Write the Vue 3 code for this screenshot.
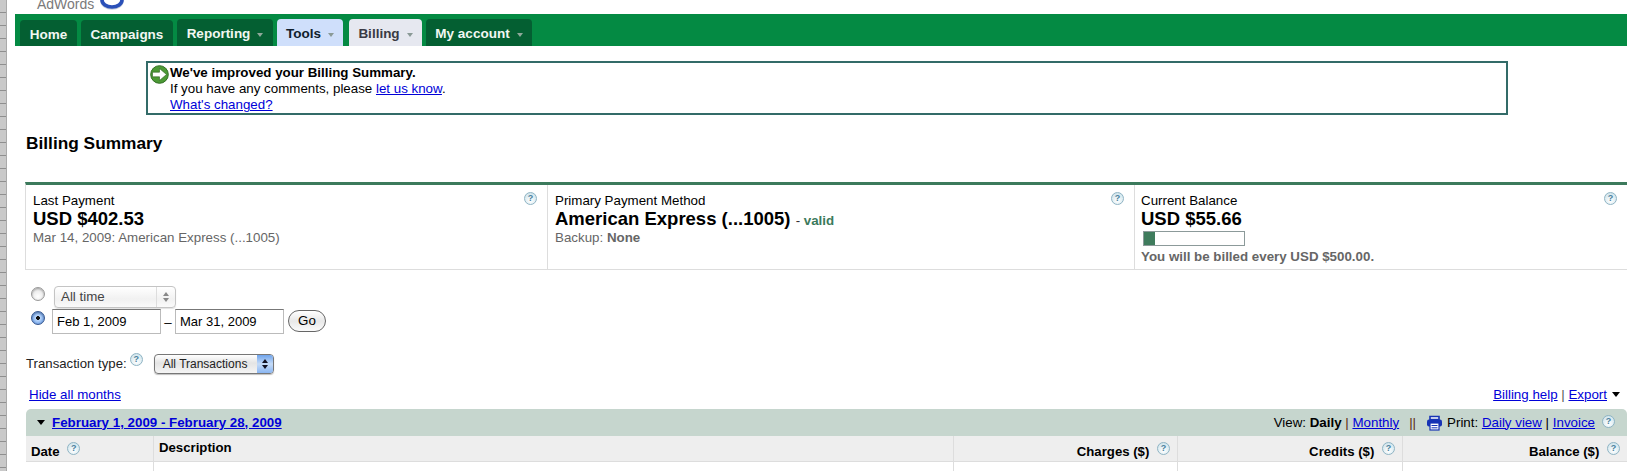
<script setup>
const tabs = [
  { label: 'Home', w: 57, cls: 'low' },
  { label: 'Campaigns', w: 92, cls: 'low' },
  { label: 'Reporting', w: 96, arrow: true },
  { label: 'Tools', w: 66, arrow: true, cls: 'tools' },
  { label: 'Billing', w: 73, arrow: true, cls: 'billing' },
  { label: 'My account', w: 106, arrow: true }
]
</script>

<template>
  <div class="page">
    <div class="strip"></div>
    <div class="main">
      <div class="logo">
        <span class="logo-text">AdWords</span>
        <svg class="logo-mark" width="24" height="11" viewBox="0 0 24 11">
          <ellipse cx="12" cy="0" rx="10" ry="7" fill="none" stroke="#c9cfdc" stroke-width="3.6" transform="translate(0 1)" />
          <ellipse cx="12" cy="0" rx="10" ry="7" fill="none" stroke="#2a50b8" stroke-width="3.6" />
        </svg>
      </div>

      <nav class="nav">
        <div
          v-for="t in tabs"
          :key="t.label"
          class="tab"
          :class="t.cls"
          :style="{ width: t.w + 'px' }"
        >
          {{ t.label }}<i v-if="t.arrow" class="caret"></i>
        </div>
      </nav>

      <div class="notice">
        <svg class="go-icon" width="19" height="19" viewBox="0 0 19 19">
          <circle cx="9.5" cy="9.5" r="8.8" fill="#4c9a35" stroke="#2f6d22" stroke-width="1" />
          <path d="M2.5 7.2h7V3.5l7 6-7 6v-3.7h-7z" fill="#fff" stroke="#2b5e20" stroke-width=".6" />
        </svg>
        <div>
          <div class="b">We've improved your Billing Summary.</div>
          <div>If you have any comments, please <a>let us know</a>.</div>
          <div><a>What's changed?</a></div>
        </div>
      </div>

      <h1 class="title">Billing Summary</h1>

      <section class="summary">
        <div class="cell">
          <span class="help corner">?</span>
          <div class="lbl">Last Payment</div>
          <div class="big">USD $402.53</div>
          <div class="sub">Mar 14, 2009: American Express (...1005)</div>
        </div>
        <div class="cell">
          <span class="help corner">?</span>
          <div class="lbl">Primary Payment Method</div>
          <div class="big">American Express (...1005) <span class="valid"><em>- </em><b>valid</b></span></div>
          <div class="sub">Backup: <b>None</b></div>
        </div>
        <div class="cell">
          <span class="help corner">?</span>
          <div class="lbl">Current Balance</div>
          <div class="big">USD $55.66</div>
          <div class="meter"><div class="meter-fill"></div></div>
          <div class="sub b">You will be billed every USD $500.00.</div>
        </div>
      </section>

      <div class="range">
        <div class="range-row first">
          <span class="radio"></span>
          <div class="select gray">
            <span>All time</span>
            <span class="spin"><i class="up"></i><i class="down"></i></span>
          </div>
        </div>
        <div class="range-row second">
          <span class="radio on"></span>
          <div class="input">Feb 1, 2009</div>
          <span class="dash">–</span>
          <div class="input">Mar 31, 2009</div>
          <div class="go">Go</div>
        </div>
      </div>

      <div class="ttype">
        <span>Transaction type:</span>
        <span class="help raised">?</span>
        <div class="select blue">
          <span>All Transactions</span>
          <span class="spin"><i class="up"></i><i class="down"></i></span>
        </div>
      </div>

      <div class="links">
        <a>Hide all months</a>
        <span class="right"><a>Billing help</a> | <a>Export</a><i class="black-caret"></i></span>
      </div>

      <div class="month">
        <i class="black-caret"></i>
        <a class="b">February 1, 2009 - February 28, 2009</a>
        <div class="month-right">
          <span>View: <b>Daily</b> <em>|</em> <a>Monthly</a></span>
          <em class="sep">||</em>
          <svg class="printer" width="17" height="16" viewBox="0 0 17 16">
            <path d="M4 1.5h9v3H4z" fill="#fff" stroke="#1733b5" stroke-width="1.6" />
            <rect x="1" y="4.5" width="15" height="7" rx="2" fill="#1733b5" />
            <rect x="4" y="8" width="9" height="7" fill="#fff" stroke="#1733b5" stroke-width="1.2" />
            <path d="M5.5 10.5h6M5.5 12.8h6" stroke="#1733b5" stroke-width="1" />
          </svg>
          <span>Print: <a>Daily view</a> | <a>Invoice</a></span>
          <span class="help">?</span>
        </div>
      </div>

      <div class="table">
        <div class="th left date">Date <span class="help">?</span></div>
        <div class="th left desc">Description</div>
        <div class="th">Charges ($) <span class="help">?</span></div>
        <div class="th">Credits ($) <span class="help">?</span></div>
        <div class="th">Balance ($) <span class="help">?</span></div>
        <div class="td"></div>
        <div class="td"></div>
        <div class="td"></div>
        <div class="td"></div>
        <div class="td"></div>
      </div>
    </div>
  </div>
</template>

<style>
html, body { margin: 0; background: #fff; overflow: hidden; }
</style>

<style scoped>
.page {
  display: flex;
  width: 1627px;
  height: 471px;
  overflow: hidden;
  font: 13.33px/16px "Liberation Sans", Arial, sans-serif;
  color: #000;
  background: #fff;
}
a { color: #0000d8; text-decoration: underline; }
.b { font-weight: bold; }
em { font-style: normal; }

.strip {
  flex: 0 0 7px;
  border-right: 1px solid #aaa;
  box-sizing: border-box;
  background: repeating-linear-gradient(#c9c9c9 0 12px, #8f8f8f 12px 13px);
}
.main { flex: 1; min-width: 0; }

.logo {
  height: 14px;
  padding-left: 30px;
  display: flex;
  align-items: flex-start;
}
.logo-text { margin-top: -3px; font-size: 14px; line-height: 14px; color: #7a7a7a; }
.logo-mark { margin-left: 6px; }

.nav {
  height: 32px;
  margin-left: 8px;
  padding-left: 5px;
  background: #048a43;
  display: flex;
  align-items: flex-end;
  gap: 4px;
}
.tab {
  height: 27px;
  box-sizing: border-box;
  padding-top: 7px;
  text-align: center;
  font-size: 13.5px;
  font-weight: bold;
  color: #f2f7f2;
  background: #045f32;
  border-radius: 4px 4px 0 0;
  white-space: nowrap;
}
.tab.low { height: 26px; padding-top: 7px; }
.tab.tools { background: #cfdffb; color: #10202c; margin-right: 2px; }
.tab.billing { background: #e6e8f0; color: #3a3a44; }
.caret {
  display: inline-block;
  margin-left: 7px;
  vertical-align: 1px;
  border: 3.5px solid transparent;
  border-top: 4px solid #8fa89a;
  border-bottom: 0;
}
.tools .caret, .billing .caret { border-top-color: #8a9a96; }

.notice {
  box-sizing: border-box;
  width: 1362px;
  height: 54px;
  margin: 15px 0 0 139px;
  padding: 2px 0 0 2px;
  border: 2px solid #336b68;
  display: flex;
  gap: 1px;
}
.go-icon { flex: none; }

.title {
  margin: 19px 0 0 19px;
  font-size: 17.3px;
  line-height: 19px;
  font-weight: bold;
}

.summary {
  box-sizing: border-box;
  height: 88px;
  margin: 29px 0 0 18px;
  border-top: 3px solid #3c7a5c;
  border-bottom: 1px solid #ddd;
  border-left: 1px solid #ddd;
  display: grid;
  grid-template-columns: 522px 587px 1fr;
}
.cell {
  position: relative;
  padding: 8px 0 0 7px;
  border-right: 1px solid #ddd;
}
.cell:last-child { border-right: 0; padding-left: 6px; }
.lbl { line-height: 15px; }
.big { font-size: 18.5px; line-height: 21px; font-weight: bold; white-space: nowrap; }
.sub { color: #666; line-height: 17px; }
.valid { font-size: 13.33px; line-height: 1; font-weight: normal; color: #333; }
.valid b { color: #3c7a5c; }
.meter {
  box-sizing: border-box;
  width: 102px;
  height: 15px;
  margin: 2px 0 2px 2px;
  border: 1px solid #8c9a9a;
}
.meter-fill { width: 11px; height: 100%; background: #3f7c5d; }

.help {
  display: inline-block;
  box-sizing: border-box;
  width: 13px;
  height: 13px;
  border: 1px solid #8fb4c4;
  border-radius: 50%;
  background: radial-gradient(circle at 50% 70%, #fff, #c6dfe8);
  color: #4a7f9c;
  font-size: 9px;
  font-weight: bold;
  line-height: 11px;
  text-align: center;
  vertical-align: 2px;
}
.help.corner { position: absolute; top: 7px; right: 10px; }

.range { margin: 16px 0 0 24px; }
.range-row { display: flex; align-items: center; }
.range-row.first { height: 22px; }
.range-row.second { height: 24px; margin-top: 1px; }
.radio {
  flex: none;
  box-sizing: border-box;
  width: 14px;
  height: 14px;
  margin-top: -7px;
  border: 1px solid #999;
  border-radius: 50%;
  background: radial-gradient(circle at 50% 70%, #fff, #ddd);
  box-shadow: inset 0 1px 2px rgba(0,0,0,.3);
}
.radio.on {
  border-color: #36578f;
  background: radial-gradient(circle, #111 0 1.6px, #bcd8fb 2.2px, #4a85dc 100%);
}
.select {
  box-sizing: border-box;
  display: flex;
  align-items: center;
  justify-content: space-between;
  margin-left: 9px;
  border-radius: 4px;
  white-space: nowrap;
}
.select.gray {
  width: 122px;
  height: 22px;
  padding-left: 6px;
  color: #444;
  border: 1px solid #c4c4c4;
  background: linear-gradient(#fff, #f1f1f1 60%, #fafafa);
  box-shadow: 0 1px 1px rgba(0,0,0,.12);
}
.select.gray .spin { border-left: 1px solid #ddd; }
.spin {
  align-self: stretch;
  width: 18px;
  display: flex;
  flex-direction: column;
  align-items: center;
  justify-content: center;
  gap: 2px;
}
.up, .down { display: block; border: 3px solid transparent; }
.up { border-top: 0; border-bottom: 4px solid #888; }
.down { border-bottom: 0; border-top: 4px solid #888; }
.select.blue {
  width: 120px;
  height: 20px;
  margin-left: 11px;
  padding-left: 8px;
  font-size: 12px;
  color: #222;
  border: 1px solid #777;
  background: linear-gradient(#fff, #e4e4e4 45%, #f5f5f5);
  box-shadow: 0 1px 1px rgba(0,0,0,.25);
}
.select.blue .spin {
  width: 16px;
  border-radius: 0 3px 3px 0;
  background: linear-gradient(#6fa4ec, #c6dcf8 50%, #8ab6f2);
}
.select.blue .up { border-bottom-color: #112; }
.select.blue .down { border-top-color: #112; }
.input {
  box-sizing: border-box;
  width: 109px;
  height: 25px;
  padding: 4px 0 0 4px;
  font-size: 13px;
  border: 1px solid #bbb;
  border-top-color: #777;
}
.range-row.second .input:first-of-type { margin-left: 7px; }
.dash { width: 14px; text-align: center; padding-top: 3px; }
.go {
  box-sizing: border-box;
  width: 38px;
  height: 22px;
  margin-left: 4px;
  text-align: center;
  line-height: 20px;
  border: 1px solid #666;
  border-radius: 11px;
  background: linear-gradient(#fff, #e8e8e8 50%, #fafafa);
}

.ttype {
  margin: 21px 0 0 19px;
  height: 20px;
  display: flex;
  align-items: center;
  white-space: pre;
  color: #222;
  font-size: 13.2px;
}
.ttype .help { margin-left: 3px; }
.help.raised { transform: translateY(-5px); }

.links {
  display: flex;
  justify-content: space-between;
  margin: 13px 0 0 22px;
  height: 16px;
}
.links .right { color: #555; padding-right: 7px; }
.black-caret {
  display: inline-block;
  margin-left: 5px;
  vertical-align: 2px;
  border: 4.5px solid transparent;
  border-top: 5px solid #000;
  border-bottom: 0;
}
.month {
  box-sizing: border-box;
  height: 27px;
  margin: 6px 0 0 19px;
  padding: 0 11px 0 6px;
  background: #c6d6ce;
  border-radius: 5px 5px 0 0;
  display: flex;
  align-items: center;
}
.month > .black-caret { margin: 0 7px 0 5px; vertical-align: 0; }
.month-right {
  margin-left: auto;
  display: flex;
  align-items: center;
}
.month-right em { color: #5a2a10; }
.sep { margin: 0 10px 0 10px; }
.printer { margin-right: 4px; }
.month-right .help { margin: -3px 1px 0 7px; }

.table {
  margin-left: 19px;
  display: grid;
  grid-template-columns: 128px 800px 224px 225px 224px;
  grid-template-rows: 26px 20px;
}
.th {
  box-sizing: border-box;
  background: #eee;
  border-bottom: 1px solid #ddd;
  border-right: 1px solid #ddd;
  padding: 6px 7px 0 0;
  text-align: right;
  font-weight: bold;
  font-size: 13.2px;
  white-space: nowrap;
}
.th.left { text-align: left; padding-left: 5px; }
.th.date { padding-top: 6px; }
.th.desc { padding-top: 4px; }
.th .help { margin-left: 4px; font-weight: bold; vertical-align: 5px; }
.th:nth-child(5) { border-right: 0; }
.td { border-right: 1px solid #ddd; }
.td:last-child { border-right: 0; }
</style>
